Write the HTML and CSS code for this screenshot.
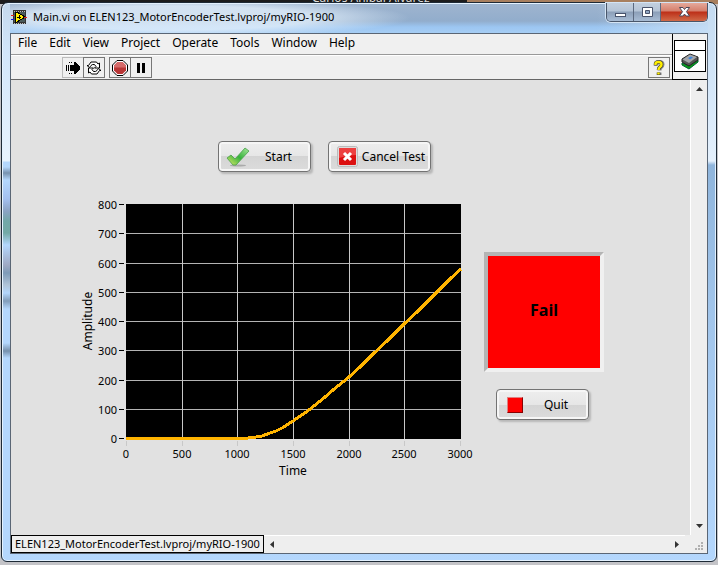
FILE: index.html
```
<!DOCTYPE html>
<html lang="en">
<head>
	<meta charset="UTF-8">
	<title>Main.vi</title>
	<link rel="stylesheet" href="styles.css">
</head>
<body>
	<div class="behind">Carlos Anibal Alvarez</div>
	<div class="window">
		<header class="titlebar">
			<svg class="viIcon" width="16" height="14" viewBox="0 0 16 14" shape-rendering="crispEdges">
				<rect x="2" y="0" width="13" height="14" fill="#333"/>
				<path d="M3 1h11M3 13h11" stroke="#bbb" stroke-width="1" stroke-dasharray="1 1"/>
				<rect x="3" y="2" width="11" height="10" fill="#4a5a5a"/>
				<path d="M4 2h2l8 5-8 5h-2z" fill="#ffee00" stroke="#000"/>
				<path d="M6 7h4M8 5v4" stroke="#000"/>
				<path d="M0 5h3M13 7h3" stroke="#e02020"/>
				<path d="M0 9h3" stroke="#1010e0"/>
			</svg>
			<h1 class="title">Main.vi on ELEN123_MotorEncoderTest.lvproj/myRIO-1900</h1>
			<div class="controls">
				<button class="ctrl" aria-label="Minimize">
					<svg width="13" height="13" viewBox="0 0 13 13"><rect x="1.5" y="7.5" width="10" height="3" fill="#fff" stroke="#49536b"/></svg>
				</button>
				<button class="ctrl" aria-label="Maximize">
					<svg width="13" height="13" viewBox="0 0 13 13"><path d="M1.500 1.500h10v9h-10z" fill="#fff" stroke="#49536b"/><path d="M4.500 4.500h4v3h-4z" fill="#91a7c4" stroke="#49536b"/></svg>
				</button>
				<button class="ctrl close" aria-label="Close">
					<svg width="13" height="12" viewBox="0 0 13 12"><path d="M1.500 1.500h3.500l1.500 2 1.500-2h3.500l-3 4.200 3 4.300h-3.500l-1.500-2-1.500 2h-3.500l3-4.300z" fill="#fff" stroke="#4a4658"/></svg>
				</button>
			</div>
		</header>

		<div class="client">
			<div class="top">
				<div class="bars">
					<nav class="menu">
						<button>File</button>
						<button>Edit</button>
						<button>View</button>
						<button>Project</button>
						<button>Operate</button>
						<button>Tools</button>
						<button>Window</button>
						<button>Help</button>
					</nav>
					<div class="toolbar">
						<div class="group">
							<button class="tool run" aria-label="Run">
								<svg width="16" height="14" viewBox="0 0 16 14" shape-rendering="crispEdges">
									<path d="M1 4v6M3 4v6" stroke="#000" stroke-width="1"/>
									<path d="M5 4h4V1l1 0 5 5v2l-5 5H9v-3H5z" fill="#000"/>
									<path d="M4 1h4M4 12h4" stroke="#000" stroke-dasharray="1 1"/>
								</svg>
							</button>
							<button class="tool" aria-label="Run continuously">
								<svg width="16" height="16" viewBox="0 0 16 16" fill="#fff" stroke="#000">
									<path d="M3.500 7.500l-2.500-2h1.500l2.500-3.500h5.500l1.500 2 1.500-1v5h-5l1.500-1.500-1.500-2h-2l-1.500 1z"/>
									<path d="M12.500 8.500l2.500 2h-1.500l-2.500 3.500h-5.500l-1.500-2-1.500 1v-5h5l-1.500 1.500 1.500 2h2l1.500-1z"/>
								</svg>
							</button>
						</div>
						<div class="group">
							<button class="tool" aria-label="Abort">
								<svg width="16" height="16" viewBox="0 0 16 16">
									<path d="M5 .5h6l4.500 4.500v6l-4.500 4.500h-6l-4.500-4.500v-6z" fill="#fff" stroke="#000"/>
									<path d="M5.500 2h5l3.500 3.500v5l-3.500 3.500h-5l-3.500-3.500v-5z" fill="#b83636"/>
									<path d="M5.500 2h5l3.500 3.500v2h-12v-2z" fill="#d56a6a"/>
								</svg>
							</button>
							<button class="tool" aria-label="Pause">
								<svg width="10" height="10" viewBox="0 0 10 10"><path d="M1 0h3v10h-3zM6 0h3v10h-3z" fill="#000"/></svg>
							</button>
						</div>
						<button class="tool help" aria-label="Context help">
							<svg width="12" height="16" viewBox="0 0 12 16" fill="none">
								<path d="M3.500 5.500V4q0-2 3-2t3 2.500q0 1.500-1.500 2.500t-1.500 3.500M6.500 12.500v2.500" stroke="#888" stroke-width="4"/>
								<path d="M2.500 5.500V4q0-2 3-2t3 2.500q0 1.500-1.500 2.500t-1.500 3M5.500 12.500v2.500" stroke="#333" stroke-width="3.500"/>
								<path d="M2.500 5V4q0-2 3-2t3 2.500q0 1.500-1.500 2.500t-1.500 3M5.500 12.500v2" stroke="#ffee00" stroke-width="2.500"/>
							</svg>
						</button>
					</div>
				</div>
				<div class="iconPane">
					<div class="connector"></div>
					<div class="target">
						<svg width="18" height="17" viewBox="0 0 18 17">
							<path d="M1 10l7 3 9-6v2l-9 7-7-4z" fill="#0a9a14" stroke="#063"/>
							<path d="M1 6l8-5 8 3v3l-9 6-7-4z" fill="#555" stroke="#222"/>
							<path d="M1.500 6.500l7.500-5 7 2.500-8 6z" fill="#a4a6aa"/>
							<path d="M7 5l3-1.500 2 1-3 2z" fill="#3f86dc"/>
						</svg>
					</div>
				</div>
			</div>

			<div class="middle">
				<main class="panel">
					<section class="test">
						<div class="actions">
							<button class="btn">
								<svg class="check" width="24" height="20" viewBox="0 0 24 20">
									<defs>
										<linearGradient id="green" x1="1" y1="0" x2="0" y2="1">
											<stop offset="0" stop-color="#a8e89a"/>
											<stop offset=".5" stop-color="#36b23c"/>
											<stop offset="1" stop-color="#e4ec6a"/>
										</linearGradient>
									</defs>
									<ellipse cx="12" cy="18.500" rx="8" ry="1" fill="#aaa"/>
									<path d="M1 11l4-3 4 4 10-11 4 3-13 14h-3z" fill="url(#green)" stroke="#48a04a" stroke-width=".8"/>
								</svg>
								<span>Start</span>
							</button>
							<button class="btn cancel">
								<svg width="21" height="21" viewBox="0 0 21 21">
									<rect x=".5" y=".5" width="20" height="20" rx="2" fill="#ddd" stroke="#bbb"/>
									<rect x="2" y="2" width="17" height="17" rx="1" fill="#dc1010"/>
									<path d="M2 3q0-1 1-1h15q1 0 1 1v6q-8 0-17 3z" fill="#ed4040"/>
									<path d="M7 7l7 7M14 7l-7 7" stroke="#fff" stroke-width="3"/>
								</svg>
								<span>Cancel Test</span>
							</button>
						</div>
						<svg class="chart" viewBox="81 198 380 280" role="img" aria-label="Amplitude over time">
							<rect x="126" y="204" width="335" height="235" fill="#000"/>
							<path class="gridY" d="M126 233.500h335M126 263.500h335M126 292.500h335M126 321.500h335M126 350.500h335M126 380.500h335M126 409.500h335"/>
							<path class="gridX" d="M182.500 204v235M237.500 204v235M293.500 204v235M349.500 204v235M404.500 204v235"/>
							<path class="ticksY" d="M119 204.500h5M119 233.500h5M119 263.500h5M119 292.500h5M119 321.500h5M119 350.500h5M119 380.500h5M119 409.500h5M119 438.500h5"/>
							<path class="ticksX" d="M126.500 441v5M182.500 441v5M237.500 441v5M293.500 441v5M349.500 441v5M404.500 441v5M460.500 441v5"/>
							<polyline class="plot" points="126,438 248,438 256,437 262,436 270,433 276,431 282,428 293,421 309,410 325,397 333,390 349,377 360,367 373,354 387,341 404,324 417,312 430,299 443,286 450,279 461,269"/>
							<g class="labelsY">
								<text x="117" y="209">800</text>
								<text x="117" y="238">700</text>
								<text x="117" y="268">600</text>
								<text x="117" y="297">500</text>
								<text x="117" y="326">400</text>
								<text x="117" y="355">300</text>
								<text x="117" y="385">200</text>
								<text x="117" y="414">100</text>
								<text x="117" y="443">0</text>
							</g>
							<g class="labelsX">
								<text x="126" y="458">0</text>
								<text x="182" y="458">500</text>
								<text x="237" y="458">1000</text>
								<text x="293" y="458">1500</text>
								<text x="349" y="458">2000</text>
								<text x="404" y="458">2500</text>
								<text x="460" y="458">3000</text>
							</g>
							<g class="axisNames">
								<text x="293" y="475">Time</text>
								<text transform="translate(92 321) rotate(-90)">Amplitude</text>
							</g>
						</svg>
					</section>
					<section class="result">
						<output class="verdict">Fail</output>
						<button class="btn quit">
							<i class="stop"></i>
							<span>Quit</span>
						</button>
					</section>
				</main>
				<div class="scrollY">
					<button aria-label="Scroll up"><svg width="7" height="4" viewBox="0 0 7 4"><path d="M0 4l3.500-4L7 4z" fill="#333"/></svg></button>
					<button aria-label="Scroll down"><svg width="7" height="4" viewBox="0 0 7 4"><path d="M0 0l3.500 4L7 0z" fill="#333"/></svg></button>
				</div>
			</div>

			<footer class="status">
				<div class="path">ELEN123_MotorEncoderTest.lvproj/myRIO-1900</div>
				<div class="scrollX">
					<button aria-label="Scroll left"><svg width="4" height="7" viewBox="0 0 4 7"><path d="M4 0L0 3.500 4 7z" fill="#333"/></svg></button>
					<button aria-label="Scroll right"><svg width="4" height="7" viewBox="0 0 4 7"><path d="M0 0l4 3.500L0 7z" fill="#333"/></svg></button>
				</div>
				<svg class="grip" width="9" height="9" viewBox="0 0 9 9" fill="#b0b0b0">
					<path d="M6 0h2v2h-2zM3 3h2v2h-2zM6 3h2v2h-2zM0 6h2v2h-2zM3 6h2v2h-2zM6 6h2v2h-2z"/>
				</svg>
			</footer>
		</div>
	</div>
</body>
</html>
```
FILE: styles.css
```
*{
	margin: 0;
	padding: 0;
	box-sizing: border-box;
}
body{
	height: 100vh;
	display: flex;
	flex-direction: column;
	padding: 0 1px 3px 1px;
	background: linear-gradient(90deg, #1c1c1c 65%, #a87f5e 65%) top / 100% 4px no-repeat, #c4c4c8;
	font: 12px/16px "Noto Sans", "Open Sans", sans-serif;
	color: #000;
	overflow: hidden;
}
button{
	font: inherit;
	color: inherit;
	border: 0;
	background: none;
}
svg{
	display: block;
	flex: none;
}
/* bottom edge of the window behind this one */
.behind{
	flex: none;
	display: flex;
	align-items: flex-end;
	height: 2px;
	padding-left: 311px;
	line-height: 8px;
	color: #ddd;
	overflow: hidden;
}
.window{
	flex: 1;
	min-height: 0;
	display: flex;
	flex-direction: column;
	padding: 0 8px 7px 8px;
	border: 1px solid #1e2a36;
	border-radius: 7px 7px 6px 6px;
	box-shadow: inset 0 0 0 1px #e4f2ff;
	/* glass frame: title shading on top, blurred spots down the left side */
	background:
		linear-gradient(180deg, #9fb5cf 0, #92adcc 18px, #9cc6f2 24px, #a8cff5 31px, transparent 31px) 8px 0 / calc(100% - 16px) 100% no-repeat,
		linear-gradient(180deg, #c4d8ec 0, #d2e6fa 50px, #e8f3fe 158px, #b4d7fd 159px, #b4d7fd 164px, #7892ae 170px, #b4d7fd 177px, #a4c0f0 196px, #8ba3c4 208px, #72a8a8 218px, #74aaa6 230px, #b4d7fd 242px, #9fa9c4 262px, #7e9bb8 270px, #b0c4d8 282px, #b4d7fd 290px, #829dba 298px, #b4d7fd 306px, #b4d7fd 340px, #7690ac 348px, #b4d7fd 355px) left / 9px 100% no-repeat,
		linear-gradient(180deg, #c4dbf1 0, #d8e9fa 100px, #e4f0fc 158px, #8fb5dc 162px, #a0c4ea 300px, #b4d7fd 100%);
}
.titlebar{
	flex: none;
	height: 30px;
	display: flex;
	align-items: flex-start;
	background: radial-gradient(ellipse 240px 20px at 160px 15px, rgba(225,238,250,.8) 60%, transparent), linear-gradient(90deg, transparent 84%, rgba(205,226,246,.8));
}
.viIcon{
	margin: 7px 6px 0 1px;
}
.title{
	flex: 1;
	padding-top: 6px;
	font-size: 11px;
	font-weight: normal;
	white-space: nowrap;
}
.controls{
	display: flex;
	height: 19px;
	border: 1px solid #49566a;
	border-top: 0;
	border-radius: 0 0 5px 5px;
	overflow: hidden;
	box-shadow: 0 0 0 1px #d4e4f4;
}
.ctrl{
	width: 27px;
	display: flex;
	align-items: center;
	justify-content: center;
	border-right: 1px solid #5c6a80;
	background: linear-gradient(#c2cfde 0, #b5c4d6 8px, #8c9fb8 9px, #a8bcd4);
}
.close{
	width: 46px;
	border: 0;
	background: linear-gradient(#e5a99b 0, #d57f6c 8px, #bd2f18 9px, #d06a48);
}
.client{
	flex: 1;
	min-height: 0;
	display: flex;
	flex-direction: column;
	border: 1px solid #5a6675;
	background: #f0f0f0;
}
.top{
	flex: none;
	display: flex;
	height: 46px;
}
.bars{
	flex: 1;
	border-bottom: 1px solid #666;
}
.menu{
	display: flex;
	gap: 12px;
	height: 21px;
	padding: 0 7px 2px;
	border-bottom: 1px solid #999;
}
.toolbar{
	display: flex;
	gap: 4px;
	height: 24px;
	padding: 1px 2px 0 51px;
	border-top: 1px solid #fff;
}
.group{
	display: flex;
}
.tool{
	display: flex;
	align-items: center;
	justify-content: center;
	width: 22px;
	height: 21px;
	border: 1px solid #777;
}
.tool + .tool{
	margin-left: -1px;
}
.run{
	border-color: #bbb;
}
.help{
	margin-left: auto;
}
.iconPane{
	width: 35px;
	padding: 6px 1px 7px;
	border: solid #000;
	border-width: 0 0 1px 1px;
}
.connector{
	height: 11px;
	border: 1px solid #000;
	background: #fff;
}
.target{
	display: flex;
	align-items: center;
	justify-content: center;
	height: 21px;
	border: 1px solid #000;
	border-top: 0;
	background: #fff;
}
.middle{
	flex: 1;
	min-height: 0;
	display: flex;
}
.panel{
	flex: 1;
	display: flex;
	gap: 23px;
	padding: 61px 0 0 70px;
	background: #e1e1e1;
}
.test{
	width: 380px;
}
.actions{
	display: flex;
	gap: 17px;
	padding-left: 137px;
	margin-bottom: 26px;
}
.btn{
	display: flex;
	align-items: center;
	width: 93px;
	height: 31px;
	padding: 1px 7px 0;
	border: 1px solid #737373;
	border-radius: 4px;
	background: linear-gradient(#eee 0, #e6e6e6 50%, #d4d4d4 50%, #dcdcdc);
	box-shadow: inset 0 0 0 2px #f6f6f6, 2px 2px 2px #b8b8b8;
	white-space: nowrap;
}
.btn span{
	flex: 1;
	text-align: center;
}
.check{
	margin-right: 4px;
}
.cancel{
	width: 103px;
	padding: 0 5px 0 8px;
}
.cancel span{
	text-align: right;
}
.chart{
	width: 100%;
	overflow: visible;
	font-size: 11px;
}
.gridX, .gridY{
	stroke: #b4b4b4;
}
.gridX{
	stroke: #c8c8c8;
}
.ticksY{
	stroke: #000;
}
.ticksX{
	stroke: #c8c8c8;
}
.plot{
	fill: none;
	stroke: #ffb400;
	stroke-width: 3;
	shape-rendering: crispEdges;
}
.labelsY{
	text-anchor: end;
}
.labelsX{
	text-anchor: middle;
}
.axisNames{
	text-anchor: middle;
	font-size: 12px;
}
.result{
	display: flex;
	flex-direction: column;
	align-items: flex-start;
	gap: 17px;
	padding-top: 111px;
}
.verdict{
	display: flex;
	align-items: center;
	justify-content: center;
	width: 120px;
	height: 120px;
	padding-bottom: 4px;
	border: 4px solid;
	border-color: #b4b4b4 #f0f0f0 #f0f0f0 #b4b4b4;
	background: #f00;
	font-size: 16px;
	font-weight: bold;
}
.quit{
	margin-left: 12px;
	padding-left: 10px;
}
.stop{
	width: 16px;
	height: 16px;
	margin-right: 8px;
	border: 1px solid;
	border-color: #e08080 #800 #800 #e08080;
	background: #f00;
}
.scrollY{
	display: flex;
	flex-direction: column;
	justify-content: space-between;
	align-items: center;
	width: 17px;
	padding: 7px 0;
	border-left: 1px solid #fff;
	background: #eee;
}
.status{
	flex: none;
	display: flex;
	height: 18px;
	background: #eee;
}
.path{
	padding: 0 3px;
	border: 1px solid #000;
	font-size: 11px;
	white-space: nowrap;
}
.scrollX{
	flex: 1;
	display: flex;
	justify-content: space-between;
	align-items: center;
	padding: 0 6px;
	border-top: 1px solid #fff;
}
.grip{
	margin: 7px 3px 0 10px;
}
```
